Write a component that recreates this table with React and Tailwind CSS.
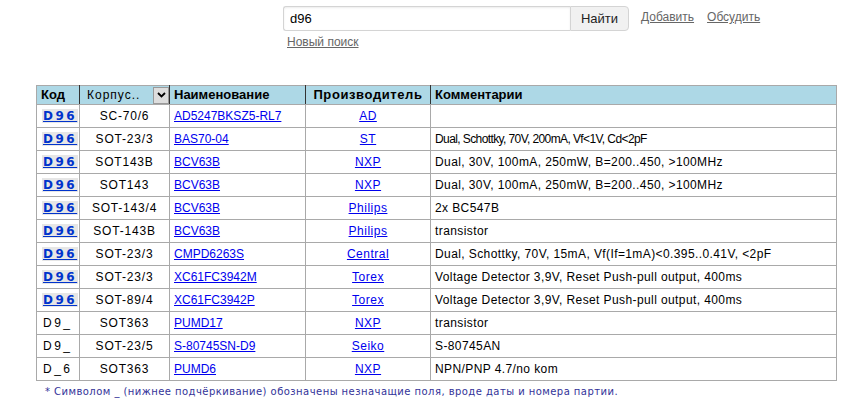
import React from 'react';

const rows = [
  { code: 'D96', hl: true, pkg: 'SC-70/6', name: 'AD5247BKSZ5-RL7', mfr: 'AD', note: '' },
  { code: 'D96', hl: true, pkg: 'SOT-23/3', name: 'BAS70-04', mfr: 'ST', note: 'Dual, Schottky, 70V, 200mA, Vf<1V, Cd<2pF', narrow: true },
  { code: 'D96', hl: true, pkg: 'SOT143B', name: 'BCV63B', mfr: 'NXP', note: 'Dual, 30V, 100mA, 250mW, B=200..450, >100MHz' },
  { code: 'D96', hl: true, pkg: 'SOT143', name: 'BCV63B', mfr: 'NXP', note: 'Dual, 30V, 100mA, 250mW, B=200..450, >100MHz' },
  { code: 'D96', hl: true, pkg: 'SOT-143/4', name: 'BCV63B', mfr: 'Philips', note: '2x BC547B' },
  { code: 'D96', hl: true, pkg: 'SOT-143B', name: 'BCV63B', mfr: 'Philips', note: 'transistor' },
  { code: 'D96', hl: true, pkg: 'SOT-23/3', name: 'CMPD6263S', mfr: 'Central', note: 'Dual, Schottky, 70V, 15mA, Vf(If=1mA)<0.395..0.41V, <2pF' },
  { code: 'D96', hl: true, pkg: 'SOT-23/3', name: 'XC61FC3942M', mfr: 'Torex', note: 'Voltage Detector 3,9V, Reset Push-pull output, 400ms' },
  { code: 'D96', hl: true, pkg: 'SOT-89/4', name: 'XC61FC3942P', mfr: 'Torex', note: 'Voltage Detector 3,9V, Reset Push-pull output, 400ms' },
  { code: 'D9_', hl: false, pkg: 'SOT363', name: 'PUMD17', mfr: 'NXP', note: 'transistor' },
  { code: 'D9_', hl: false, pkg: 'SOT-23/5', name: 'S-80745SN-D9', mfr: 'Seiko', note: 'S-80745AN' },
  { code: 'D_6', hl: false, pkg: 'SOT363', name: 'PUMD6', mfr: 'NXP', note: 'NPN/PNP 4.7/no kom' },
];

const cell = 'border border-[#a9a9a9] h-[23px] p-0 whitespace-nowrap';
const head = 'border border-[#a9a9a9] border-r-[#333] h-[18px] p-0 whitespace-nowrap';

export default function App() {
  return (
    <div className="w-[854px] h-[399px] bg-white overflow-hidden font-['Liberation_Sans',Arial,sans-serif] text-[12px] text-black">
      {/* search bar */}
      <div className="flex items-start pl-[283px] pt-[6px]">
        <div>
          <div className="flex">
            <input
              readOnly
              value="d96"
              className="w-[287px] h-[25px] border border-[#d4d4d4] border-r-0 rounded-l-[3px] px-[6px] text-[13px] font-['Liberation_Sans',Arial,sans-serif] shadow-[inset_0_1px_2px_rgba(0,0,0,0.08)] outline-none"
            />
            <button className="w-[59px] h-[25px] border border-[#d4d4d4] rounded-r-[4px] bg-[#f1f1f1] text-[13px] text-[#222]">
              Найти
            </button>
          </div>
          <a href="#" className="block mt-[3px] ml-[4px] text-[12px] text-[#666] underline leading-[16px]">
            Новый поиск
          </a>
        </div>
        <div className="flex gap-[13px] ml-[12px] mt-[2px] text-[12px] text-[#666]">
          <a href="#" className="underline">Добавить</a>
          <a href="#" className="underline">Обсудить</a>
        </div>
      </div>

      {/* results table */}
      <table className="ml-[36px] mt-[35px] w-[801px] border-collapse table-fixed">
        <colgroup>
          <col className="w-[43px]" />
          <col className="w-[90px]" />
          <col className="w-[136px]" />
          <col className="w-[125px]" />
          <col />
        </colgroup>
        <thead>
          <tr className="bg-[#add8e6] font-bold text-[13px] leading-[16px]">
            <th className={head + ' px-[4px] text-left'}>Код</th>
            <th className={head + ' font-normal text-[12px]'}>
              <div className="flex items-center h-[18px]">
                <span className="flex-1 text-left pl-[7px] tracking-[1px]">Корпус..</span>
                <span className="w-[16px] h-[17px] border border-[#999] bg-[#ddd] flex items-center justify-center">
                  <svg width="9" height="6" viewBox="0 0 9 6">
                    <path d="M1 1l3.5 3.5L8 1" fill="none" stroke="#000" strokeWidth="1.8" />
                  </svg>
                </span>
              </div>
            </th>
            <th className={head + ' px-[4px] text-left'}>Наименование</th>
            <th className={head + ' px-[4px] text-center tracking-[0.6px]'}>Производитель</th>
            <th className="border border-[#a9a9a9] h-[18px] p-0 px-[4px] text-left">Комментарии</th>
          </tr>
        </thead>
        <tbody>
          {rows.map((r, i) => (
            <tr key={i}>
              <td className={cell + ' px-[5px]'}>
                {r.hl ? (
                  <a href="#" className="bg-[#e6e6e6] text-[#0033cc] font-bold underline tracking-[2.5px] font-['DejaVu_Sans',Verdana,sans-serif] px-[1px]">
                    {r.code}
                  </a>
                ) : (
                  <span className="tracking-[2.5px] pl-[1px]">{r.code}</span>
                )}
              </td>
              <td className={cell + ' text-center tracking-[0.8px]'}>{r.pkg}</td>
              <td className={cell + ' px-[4px]'}>
                <a href="#" className="text-[#0000ee] underline">{r.name}</a>
              </td>
              <td className={cell + ' text-center'}>
                <a href="#" className="text-[#0000ee] underline tracking-[0.5px]">{r.mfr}</a>
              </td>
              <td className={cell + ' px-[4px] ' + (r.narrow ? 'tracking-[-0.6px]' : 'tracking-[0.4px]')}>
                {r.note}
              </td>
            </tr>
          ))}
        </tbody>
      </table>

      <p className="ml-[45px] mt-[3px] text-[10px] tracking-[0.45px] text-[#333399] font-['DejaVu_Sans',Verdana,sans-serif]">
        * Символом _ (нижнее подчёркивание) обозначены незначащие поля, вроде даты и номера партии.
      </p>
    </div>
  );
}
